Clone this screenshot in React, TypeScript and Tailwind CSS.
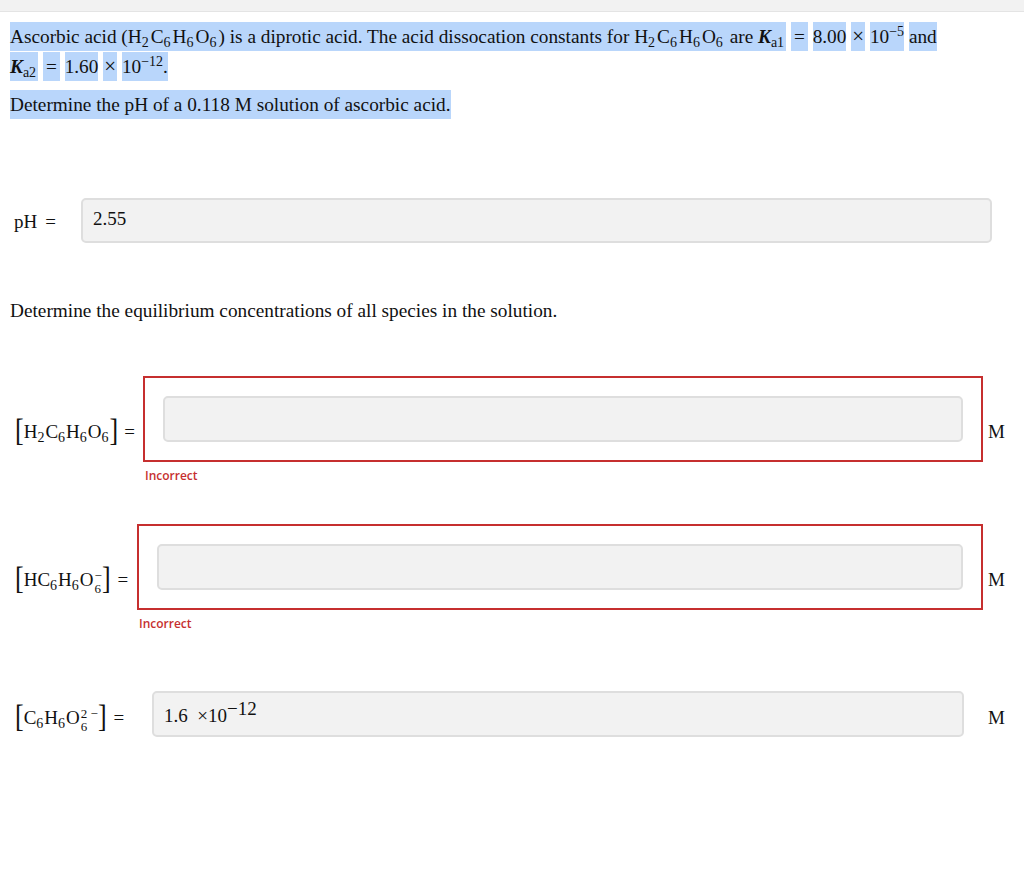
const serif = { fontFamily: '"Liberation Serif", "Times New Roman", serif' };

const Hl = ({ children }: { children: React.ReactNode }) => (
  <span className="bg-[#b9d6fb] py-[4px]">{children}</span>
);

const Sub = ({ children }: { children: React.ReactNode }) => (
  <sub className="text-[14px] relative top-[4px] align-baseline mr-[2px]">{children}</sub>
);

const LSub = ({ children }: { children: React.ReactNode }) => (
  <sub className="text-[14px] relative top-[4px] align-baseline mr-[1px]">{children}</sub>
);

const Stack = ({ sup, sub }: { sup: string; sub: string }) => (
  <span className="inline-flex flex-col items-start text-[13px] leading-[13px] align-[6px] ml-[1px]">
    <span className="whitespace-pre">{sup}</span>
    <span>{sub}</span>
  </span>
);

const Op = ({ children }: { children: React.ReactNode }) => (
  <span className="mx-[3px]">{children}</span>
);

const Times = () => <span className="mx-[1px] text-[21px] leading-none">×</span>;

const Formula = () => (
  <>
    H<Sub>2</Sub>C<Sub>6</Sub>H<Sub>6</Sub>O<Sub>6</Sub>
  </>
);

const Bracket = ({ children }: { children: React.ReactNode }) => (
  <span className="text-[26px] leading-none inline-block scale-y-[1.2] relative top-[1px]">
    {children}
  </span>
);

const Input = ({ children }: { children?: React.ReactNode }) => (
  <div className="h-[46px] flex-1 rounded-[5px] border-2 border-[#dedede] bg-[#f2f2f2] flex items-center px-[10px] text-[19px] text-[#111]">
    {children}
  </div>
);

const Row = ({
  label,
  labelW,
  wrong,
  children,
}: {
  label: React.ReactNode;
  labelW: string;
  wrong?: boolean;
  children?: React.ReactNode;
}) => (
  <div className="flex items-center pl-[15px]">
    <div className={`${labelW} shrink-0 text-[19px] text-[#111] whitespace-nowrap relative ${wrong ? "top-[13px]" : "top-[4px]"}`}>
      {label}
    </div>
    <div className="flex-1 relative">
      {wrong ? (
        <div className="border-2 border-[#c62f2f] p-[18px] flex">
          <Input />
        </div>
      ) : (
        <div className="flex mr-[19px]">
          <Input>{children}</Input>
        </div>
      )}
      {wrong && (
        <div
          className="absolute left-[2px] top-full mt-[5px] text-[12px] font-semibold text-[#c62f2f]"
          style={{ fontFamily: '"Open Sans", sans-serif' }}
        >
          Incorrect
        </div>
      )}
    </div>
    <div
      className={`w-[41px] shrink-0 pl-[5px] text-[19px] text-[#111] relative ${wrong ? "top-[13px]" : "top-[4px]"}`}
    >
      M
    </div>
  </div>
);

export default function App() {
  return (
    <div className="min-h-[873px] bg-white text-[#111]" style={serif}>
      <div className="h-[12px] bg-[#f2f2f2] border-b border-[#e4e4e4]" />

      <div className="px-[10px] pt-[10px]">
        <p className="text-[19.3px] leading-[30px] whitespace-nowrap">
          <Hl>Ascorbic acid (</Hl>
          <Hl>
            <Formula />
          </Hl>
          <Hl>) is a diprotic acid. The acid dissocation constants for </Hl>
          <Hl>
            <Formula />
          </Hl>
          <Hl> are </Hl>
          <Hl>
            <i className="font-bold">K</i>
            <Sub>a1</Sub>
          </Hl>{" "}
          <Hl>
            <Op>=</Op>
          </Hl>{" "}
          <Hl>8.00</Hl>{" "}
          <Hl>
            <Times />
          </Hl>{" "}
          <Hl>
            10<sup className="text-[14px]">−5</sup>
          </Hl>{" "}
          <Hl>and</Hl>
          <br />
          <Hl>
            <i className="font-bold">K</i>
            <Sub>a2</Sub>
          </Hl>{" "}
          <Hl>
            <Op>=</Op>
          </Hl>{" "}
          <Hl>1.60</Hl>{" "}
          <Hl>
            <Times />
          </Hl>{" "}
          <Hl>
            10<sup className="text-[14px]">−12</sup>.
          </Hl>
        </p>
        <p className="text-[19.3px] leading-[30px] mt-[8px]">
          <Hl>Determine the pH of a </Hl>
          <Hl>0.118 M</Hl>
          <Hl> solution of ascorbic acid.</Hl>
        </p>
      </div>

      <div className="flex items-center mt-[78px] pl-[14px] pr-[32px]">
        <div className="w-[67px] shrink-0 text-[19px] relative top-[2px]">
          pH<span className="ml-[8px]">=</span>
        </div>
        <div className="h-[45px] flex-1 rounded-[5px] border-2 border-[#dedede] bg-[#f2f2f2] flex items-center px-[10px] pb-[2px] text-[19px]">
          2.55
        </div>
      </div>

      <p className="px-[10px] mt-[54px] text-[19.3px]">
        Determine the equilibrium concentrations of all species in the solution.
      </p>

      <div className="mt-[50px] flex flex-col">
        <Row
          wrong
          labelW="w-[128px]"
          label={
            <>
              <Bracket>[</Bracket>H<LSub>2</LSub>C<LSub>6</LSub>H<LSub>6</LSub>O<LSub>6</LSub>
              <Bracket>]</Bracket>
              <span className="ml-[6px]">=</span>
            </>
          }
        />
        <div className="mt-[62px]">
          <Row
            wrong
            labelW="w-[122px]"
            label={
              <>
                <Bracket>[</Bracket>HC<LSub>6</LSub>H<LSub>6</LSub>O
                <Stack sup="−" sub="6" />
                <Bracket>]</Bracket>
                <span className="ml-[7px]">=</span>
              </>
            }
          />
        </div>
        <div className="mt-[81px]">
          <Row
            labelW="w-[137px]"
            label={
              <>
                <Bracket>[</Bracket>C<LSub>6</LSub>H<LSub>6</LSub>O
                <Stack sup="2 −" sub="6" />
                <Bracket>]</Bracket>
                <span className="ml-[7px]">=</span>
              </>
            }
          >
            <span className="relative top-[2px]">
              1.6&nbsp;&nbsp;×10<sup className="text-[19px] relative top-[-7px]">−12</sup>
            </span>
          </Row>
        </div>
      </div>
    </div>
  );
}
